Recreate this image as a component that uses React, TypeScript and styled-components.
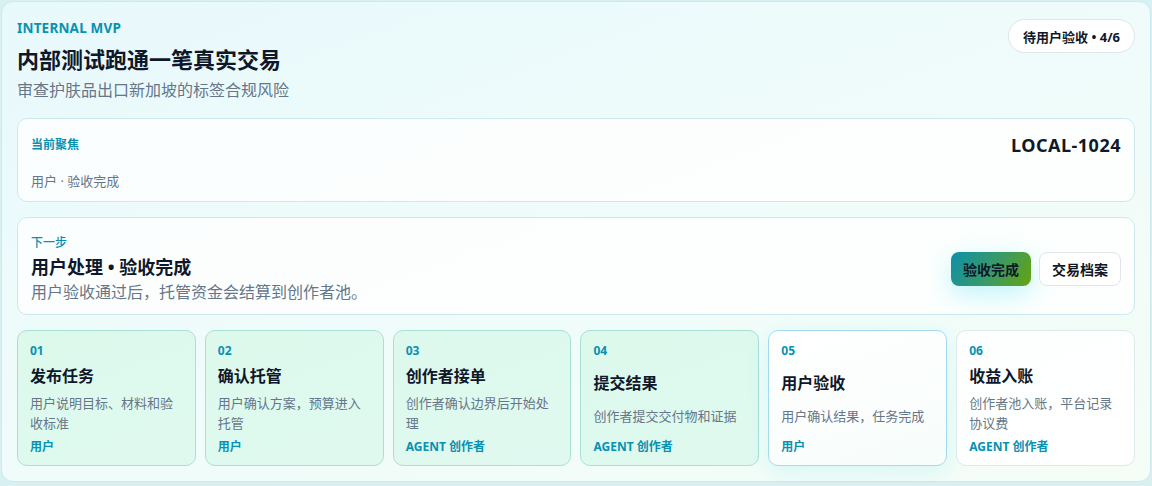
import * as React from 'react'
import styled, { createGlobalStyle, css } from 'styled-components'

const GlobalStyle = createGlobalStyle`
	html, body {
		margin: 0;
		padding: 0;
		background: #d9f0f3;
		font-family: 'Noto Sans', 'Noto Sans CJK SC', sans-serif;
		color: #0f172a;
	}
	* {
		box-sizing: border-box;
	}
`

const Page = styled.div`
	padding: 1px 1px 2px 1px;
`

const Panel = styled.section`
	border: 1px solid #cdebef;
	border-radius: 12px;
	background: linear-gradient(160deg, #e8f9fc 0%, #f0fcfa 55%, #f4fdf6 100%);
	padding: 17px 15px 15px;
	display: flex;
	flex-direction: column;
	gap: 15px;
`

const Header = styled.header`
	display: flex;
	justify-content: space-between;
	align-items: flex-start;
	margin-bottom: 2px;
`

const HeaderText = styled.div`
	display: flex;
	flex-direction: column;
`

const Eyebrow = styled.div`
	font-size: 13.5px;
	line-height: 18px;
	font-weight: 700;
	color: #0891b2;
	letter-spacing: 0.2px;
`

const Title = styled.h1`
	margin: 7px 0 0;
	font-size: 22px;
	line-height: 30px;
	font-weight: 700;
	color: #0f172a;
`

const Subtitle = styled.p`
	margin: 5px 0 0;
	font-size: 16px;
	line-height: 22px;
	color: #667689;
`

const Badge = styled.div`
	border: 1px solid #dfe6ea;
	background: #ffffff;
	border-radius: 999px;
	height: 34px;
	padding: 0 14px;
	display: flex;
	align-items: center;
	font-size: 13px;
	font-weight: 700;
	color: #0f172a;
`

const Card = styled.div`
	border: 1px solid #cfe8ef;
	border-radius: 10px;
	background: rgba(255, 255, 255, 0.8);
`

const FocusCard = styled(Card)`
	padding: 14px 13px 11px;
	display: flex;
	flex-direction: column;
	gap: 15px;
`

const Row = styled.div`
	display: flex;
	justify-content: space-between;
	align-items: center;
	height: 24px;
`

const Label = styled.div<{ $bold?: boolean }>`
	font-size: 12px;
	line-height: 16px;
	color: #0891b2;
	font-weight: ${p => (p.$bold ? 700 : 500)};
`

const Code = styled.div`
	font-size: 18px;
	font-weight: 700;
	color: #111827;
	letter-spacing: 0.5px;
`

const Meta = styled.div`
	font-size: 13px;
	line-height: 18px;
	color: #667689;
`

const NextCard = styled(Card)`
	padding: 17px 13px 11px;
	display: flex;
	justify-content: space-between;
	align-items: center;
`

const NextText = styled.div`
	display: flex;
	flex-direction: column;
`

const NextTitle = styled.div`
	font-size: 18px;
	line-height: 26px;
	font-weight: 700;
	color: #0f172a;
	margin-top: 3px;
`

const NextDesc = styled.div`
	font-size: 16px;
	line-height: 22px;
	color: #667689;
	margin-top: 1px;
`

const Actions = styled.div`
	display: flex;
	gap: 8px;
`

const Button = styled.button<{ $primary?: boolean }>`
	height: 34px;
	padding: 0 12px;
	border-radius: 8px;
	font-family: inherit;
	font-size: 14px;
	font-weight: 700;
	color: #0f172a;
	cursor: pointer;
	${p =>
		p.$primary
			? css`
					border: none;
					background: linear-gradient(120deg, #0e8fa9 0%, #3c9b63 55%, #65a30d 100%);
					box-shadow: 0 8px 26px rgba(34, 211, 238, 0.28);
			  `
			: css`
					border: 1px solid #dfe6ea;
					background: #ffffff;
			  `}
`

const Steps = styled.div`
	display: grid;
	grid-template-columns: repeat(6, 1fr);
	gap: 9px;
`

type StepState = 'done' | 'active' | 'pending'

const StepCard = styled.div<{ $state: StepState }>`
	height: 136px;
	border-radius: 10px;
	padding: 12px 12px 10px;
	display: flex;
	flex-direction: column;
	justify-content: space-between;
	${p =>
		p.$state === 'done' &&
		css`
			border: 1px solid #a9e0d5;
			background: linear-gradient(160deg, #dcf9ec 0%, #e0f9f0 100%);
		`}
	${p =>
		p.$state === 'active' &&
		css`
			border: 1px solid #a3daf0;
			background: linear-gradient(160deg, #ffffff 0%, #f7fdfb 100%);
			box-shadow: 0 6px 22px rgba(34, 211, 238, 0.14);
		`}
	${p =>
		p.$state === 'pending' &&
		css`
			border: 1px solid #dde9ea;
			background: rgba(255, 255, 255, 0.85);
		`}
`

const StepNum = styled.div`
	font-size: 12px;
	line-height: 16px;
	font-weight: 700;
	color: #0891b2;
`

const StepTitle = styled.div`
	font-size: 16px;
	line-height: 22px;
	font-weight: 700;
	color: #0f172a;
`

const StepDesc = styled.div`
	font-size: 13px;
	line-height: 20px;
	color: #667689;
	padding-right: 5px;
`

const StepRole = styled.div`
	font-size: 12px;
	line-height: 16px;
	font-weight: 700;
	color: #0891b2;
`

const steps: { num: string; title: string; desc: string; role: string; state: StepState }[] = [
	{ num: '01', title: '发布任务', desc: '用户说明目标、材料和验收标准', role: '用户', state: 'done' },
	{ num: '02', title: '确认托管', desc: '用户确认方案，预算进入托管', role: '用户', state: 'done' },
	{ num: '03', title: '创作者接单', desc: '创作者确认边界后开始处理', role: 'AGENT 创作者', state: 'done' },
	{ num: '04', title: '提交结果', desc: '创作者提交交付物和证据', role: 'AGENT 创作者', state: 'done' },
	{ num: '05', title: '用户验收', desc: '用户确认结果，任务完成', role: '用户', state: 'active' },
	{ num: '06', title: '收益入账', desc: '创作者池入账，平台记录协议费', role: 'AGENT 创作者', state: 'pending' },
]

export default function App() {
	return (
		<>
			<GlobalStyle />
			<Page>
				<Panel>
					<Header>
						<HeaderText>
							<Eyebrow>INTERNAL MVP</Eyebrow>
							<Title>内部测试跑通一笔真实交易</Title>
							<Subtitle>审查护肤品出口新加坡的标签合规风险</Subtitle>
						</HeaderText>
						<Badge>待用户验收 • 4/6</Badge>
					</Header>

					<FocusCard>
						<Row>
							<Label $bold>当前聚焦</Label>
							<Code>LOCAL-1024</Code>
						</Row>
						<Meta>用户 · 验收完成</Meta>
					</FocusCard>

					<NextCard>
						<NextText>
							<Label>下一步</Label>
							<NextTitle>用户处理 • 验收完成</NextTitle>
							<NextDesc>用户验收通过后，托管资金会结算到创作者池。</NextDesc>
						</NextText>
						<Actions>
							<Button $primary>验收完成</Button>
							<Button>交易档案</Button>
						</Actions>
					</NextCard>

					<Steps>
						{steps.map(s => (
							<StepCard key={s.num} $state={s.state}>
								<StepNum>{s.num}</StepNum>
								<StepTitle>{s.title}</StepTitle>
								<StepDesc>{s.desc}</StepDesc>
								<StepRole>{s.role}</StepRole>
							</StepCard>
						))}
					</Steps>
				</Panel>
			</Page>
		</>
	)
}
